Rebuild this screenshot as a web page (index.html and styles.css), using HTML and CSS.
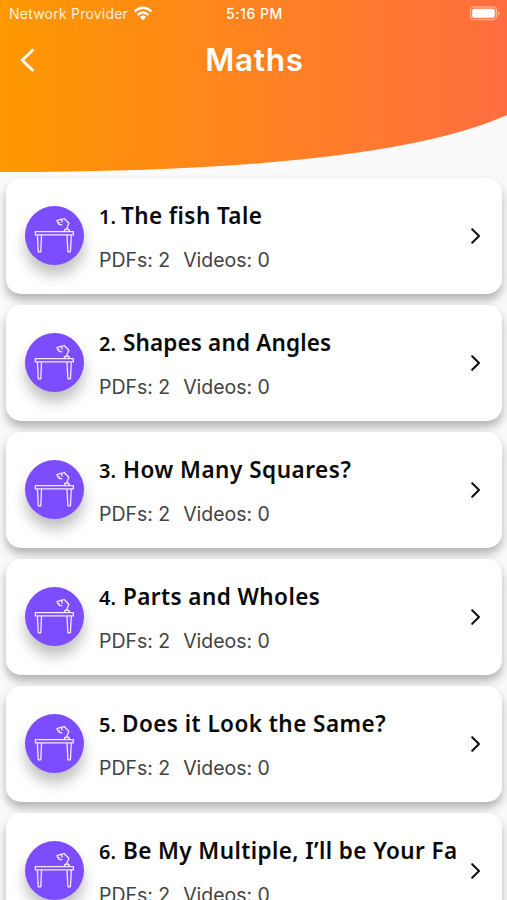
FILE: index.html
```html
<!DOCTYPE html>
<html lang="en">
<head>
<meta charset="utf-8">
<title>Maths</title>
<link rel="stylesheet" href="styles.css">
</head>
<body>
<svg class="defs" aria-hidden="true">
  <symbol id="desk" viewBox="0 0 60 60">
    <g fill="none" stroke="#f3ecff" stroke-width="1.3" stroke-linejoin="round">
      <path d="M10.5 26h38.7v3.4H10.5zM12.6 29.4h4.2l-.7 17.2h-2.6zM42.7 29.4h4.4l-.9 17.2h-2.6z"/>
      <path d="M40 25.8c0-3.2 5.2-3.2 5.2 0M42.4 23l2.2-5.4-4.8-4.9-2.8 1.1M37.2 13.4l-4.8 1.4 1 2.3 1.4-.3-.2 2 3.4.4M37 13.6l1 3.2"/>
    </g>
  </symbol>
  <symbol id="chevron" viewBox="0 0 12 18">
    <path d="M2.2 2.2 9 9l-6.8 6.8" fill="none" stroke="#111" stroke-width="2.1" stroke-linecap="round" stroke-linejoin="round"/>
  </symbol>
</svg>
<header class="header">
  <svg class="wave" viewBox="0 0 507 172" preserveAspectRatio="none" aria-hidden="true">
    <defs><linearGradient id="sunset"><stop offset="0" stop-color="#ff9800"/><stop offset="1" stop-color="#ff6e40"/></linearGradient></defs>
    <path d="M0 0H507V115Q380 172 0 172Z" fill="url(#sunset)"/>
  </svg>
  <div class="status">
    <div class="carrier"><span class="provider">Network Provider</span>
      <svg width="20" height="15" viewBox="0 0 20 15"><g fill="none" stroke="#fff" stroke-width="2.4"><path d="M1.6 5.4Q10 -1.8 18.4 5.4M4.7 8.8Q10 4.2 15.3 8.8"/></g><path d="M6.8 10.9Q10 8.3 13.2 10.9L10 14.2z" fill="#fff"/></svg>
    </div>
    <span class="time">5:16 PM</span>
    <svg class="battery" width="31" height="15" viewBox="0 0 31 15"><rect x="1.5" y="1" width="26" height="12.4" rx="3.4" fill="none" stroke="#fff" stroke-opacity=".42" stroke-width="1.5"/><rect x="3.2" y="2.7" width="22.6" height="9" rx="1.8" fill="#fff"/><path d="M29 5v4.6q1.6-.8 1.6-2.3T29 5z" fill="#fff" fill-opacity=".42"/></svg>
  </div>
  <div class="bar">
    <svg class="back" width="18" height="26" viewBox="0 0 18 26"><path d="M14.4 2.4 3.2 13.2l11.2 10.9" fill="none" stroke="#fff" stroke-width="2.8"/></svg>
    <h1>Maths</h1>
  </div>
</header>
<main class="list">
  <article class="card"><div class="badge"><svg><use href="#desk"/></svg></div><div class="info"><h2><span class="num">1.</span><span class="t1">The fish Tale</span></h2><p><span>PDFs: 2</span><span>Videos: 0</span></p></div><svg class="go"><use href="#chevron"/></svg></article>
  <article class="card"><div class="badge"><svg><use href="#desk"/></svg></div><div class="info"><h2><span class="num">2.</span><span class="t2">Shapes and Angles</span></h2><p><span>PDFs: 2</span><span>Videos: 0</span></p></div><svg class="go"><use href="#chevron"/></svg></article>
  <article class="card"><div class="badge"><svg><use href="#desk"/></svg></div><div class="info"><h2><span class="num">3.</span><span class="t3">How Many Squares?</span></h2><p><span>PDFs: 2</span><span>Videos: 0</span></p></div><svg class="go"><use href="#chevron"/></svg></article>
  <article class="card"><div class="badge"><svg><use href="#desk"/></svg></div><div class="info"><h2><span class="num">4.</span><span class="t4">Parts and Wholes</span></h2><p><span>PDFs: 2</span><span>Videos: 0</span></p></div><svg class="go"><use href="#chevron"/></svg></article>
  <article class="card"><div class="badge"><svg><use href="#desk"/></svg></div><div class="info"><h2><span class="num">5.</span><span class="t5">Does it Look the Same?</span></h2><p><span>PDFs: 2</span><span>Videos: 0</span></p></div><svg class="go"><use href="#chevron"/></svg></article>
  <article class="card"><div class="badge"><svg><use href="#desk"/></svg></div><div class="info"><h2><span class="num">6.</span><span class="t6">Be My Multiple, I’ll be Your Fa</span></h2><p><span>PDFs: 2</span><span>Videos: 0</span></p></div><svg class="go"><use href="#chevron"/></svg></article>
</main>
</body>
</html>
```
FILE: styles.css
```css
* { box-sizing: border-box; }
body { margin: 0; height: 900px; overflow: hidden; background: #fafafa; font-family: Inter, "Liberation Sans", sans-serif; }
svg { display: block; flex: none; }
.defs { position: absolute; width: 0; height: 0; }
.header { position: relative; height: 172px; color: #fff; }
.wave { position: absolute; inset: 0; width: 100%; height: 172px; z-index: -1; }
.status { display: grid; grid-template-columns: 1fr auto 1fr; align-items: center; height: 27px; padding: 0 7px 0 9px; font-size: 14px; }
.carrier { display: flex; align-items: center; gap: 5px; }
.provider { letter-spacing: .22px; white-space: nowrap; opacity: .85; }
.time { font-weight: 500; letter-spacing: .55px; }
.battery { justify-self: end; }
.bar { display: grid; grid-template-columns: 40px 1fr 40px; align-items: center; height: 66px; padding-left: 19px; padding-right: 17px; }
h1 { margin: 0; text-align: center; font-size: 31.5px; line-height: 40px; font-weight: 600; letter-spacing: .7px; }
.list { display: flex; flex-direction: column; gap: 10.5px; padding: 5.5px 5px 0 6px; }
.card { display: flex; align-items: center; flex: none; height: 116.5px; padding: 0 20px 0 19px; border-radius: 15px; background: #fff; box-shadow: 0 6px 10px rgba(0,0,0,.29); }
.badge { width: 59px; height: 59px; flex: none; border-radius: 50%; background: #7c4dff; box-shadow: 0 10px 14px rgba(0,0,0,.25); }
.badge svg { width: 59px; height: 59px; }
.info { flex: 1; min-width: 0; padding-left: 15px; }
h2 { display: flex; align-items: baseline; gap: 7px; margin: 0; height: 38px; line-height: 32px; font-family: "Noto Sans", sans-serif; font-size: 22.5px; font-weight: 600; white-space: nowrap; color: #080808; }
.num { font-size: 20px; }
.t1 { margin-left: -2px; letter-spacing: .42px; }
.t2 { letter-spacing: .15px; }
.t3 { letter-spacing: .52px; }
.t4 { letter-spacing: .42px; }
.t5 { margin-left: -1px; letter-spacing: .45px; }
.t6 { letter-spacing: .41px; }
p { display: flex; gap: 13px; margin: 8px 0 -2px; font-size: 19.5px; line-height: 28px; color: #424242; letter-spacing: -.02px; }
p span { position: relative; top: .5px; }
.go { width: 12px; height: 18px; }
```
